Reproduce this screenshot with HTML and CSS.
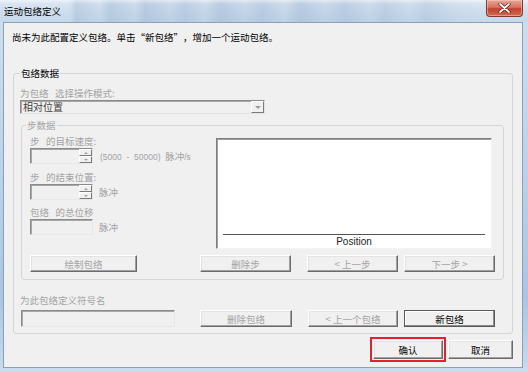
FILE: index.html
```html
<!DOCTYPE html>
<html lang="zh-CN">
<head>
<meta charset="utf-8">
<title>运动包络定义</title>
<link rel="stylesheet" href="styles.css">
</head>
<body>
<div class="window">
  <div class="titlebar">
    <span class="title">运动包络定义</span>
    <div class="close">
      <svg width="13" height="10" viewBox="0 0 13 10"><path d="M2 1 L11 9 M11 1 L2 9" stroke="#5a1a12" stroke-width="3.2" stroke-linecap="round"/><path d="M2 1 L11 9 M11 1 L2 9" stroke="#fff" stroke-width="1.7" stroke-linecap="round"/></svg>
    </div>
  </div>
  <div class="client">
    <p class="msg">尚未为此配置定义包络。单击<span class="fw fw-open">“</span>新包络<span class="fw fw-close">”</span>，增加一个运动包络。</p>
    <fieldset class="group">
      <legend class="legend">包络数据</legend>
      <div class="lbl dis">为包络&nbsp;&nbsp;&nbsp;选择操作模式:</div>
      <div class="select">
        <span class="select-text">相对位置</span>
        <span class="select-btn"><span class="tri-down"></span></span>
      </div>
      <fieldset class="step">
        <legend class="legend step-legend dis">步数据</legend>
        <div class="step-body">
          <div class="fields">
            <div class="lbl dis l1">步&nbsp;&nbsp;&nbsp;的目标速度:</div>
            <div class="field-row">
              <div class="spin"><span class="spin-btns"><span class="sb up"></span><span class="sb down"></span></span></div>
              <span class="unit dis latin">(5000&nbsp;&nbsp;-&nbsp;&nbsp;50000)&nbsp;&nbsp;<span class="cjk">脉冲</span>/s</span>
            </div>
            <div class="lbl dis l2">步&nbsp;&nbsp;&nbsp;的结束位置:</div>
            <div class="field-row">
              <div class="spin"><span class="spin-btns"><span class="sb up"></span><span class="sb down"></span></span></div>
              <span class="unit dis">脉冲</span>
            </div>
            <div class="lbl dis l3">包络&nbsp;&nbsp;&nbsp;的总位移</div>
            <div class="field-row">
              <div class="box"></div>
              <span class="unit dis">脉冲</span>
            </div>
          </div>
          <div class="plot">
            <div class="axis"></div>
            <div class="axis-label">Position</div>
          </div>
        </div>
        <div class="btn-row">
          <button class="btn dis w107">绘制包络</button>
          <button class="btn dis w91 gap-big">删除步</button>
          <button class="btn dis w91 gap16">&lt; 上一步</button>
          <button class="btn dis w91 gap6">下一步 &gt;</button>
        </div>
      </fieldset>
      <div class="lbl dis name-lbl">为此包络定义符号名</div>
      <div class="name-row">
        <div class="box name-box"></div>
        <button class="btn dis w92 gap25">删除包络</button>
        <button class="btn dis w90 gap16">&lt; 上一个包络</button>
        <button class="btn default w91 gap6">新包络</button>
      </div>
    </fieldset>
    <div class="dialog-btns">
      <span class="highlight"><button class="btn ok">确认</button></span>
      <button class="btn cancel">取消</button>
    </div>
  </div>
</div>
</body>
</html>
```

FILE: styles.css
```css
* { box-sizing: border-box; }
html, body { margin: 0; padding: 0; }
body {
  width: 528px;
  height: 372px;
  overflow: hidden;
  font-family: "Noto Sans CJK SC", "Noto Sans CJK JP", sans-serif;
  font-size: 9.5px;
  line-height: 12px;
  color: #000;
}
.window {
  width: 528px;
  height: 372px;
  display: flex;
  flex-direction: column;
  background: linear-gradient(180deg, #cfdff0 0%, #bcd2ea 45%, #a9c5e4 80%, #c9dbee 100%);
}
.titlebar {
  height: 22px;
  flex: none;
  display: flex;
  justify-content: space-between;
  align-items: flex-start;
  padding-left: 4px;
  background:
    linear-gradient(180deg, rgba(255,255,255,0.45) 0, rgba(255,255,255,0) 4px),
    linear-gradient(90deg, rgba(255,255,255,0) 0, rgba(255,255,255,0) 70px, rgba(150,175,205,0.35) 76px, rgba(150,175,205,0.1) 100px, rgba(150,175,205,0.4) 110px, rgba(150,175,205,0.15) 135px, rgba(150,175,205,0.45) 145px, rgba(150,175,205,0.2) 170px, rgba(150,175,205,0.4) 185px, rgba(150,175,205,0.15) 205px, rgba(150,175,205,0.45) 220px, rgba(150,175,205,0.2) 245px, rgba(150,175,205,0.4) 262px, rgba(150,175,205,0.15) 285px, rgba(150,175,205,0.45) 300px, rgba(150,175,205,0.2) 325px, rgba(150,175,205,0.4) 345px, rgba(150,175,205,0.15) 370px, rgba(150,175,205,0.35) 385px, rgba(150,175,205,0.1) 410px, rgba(150,175,205,0.3) 425px, rgba(150,175,205,0.05) 460px, rgba(255,255,255,0) 480px),
    linear-gradient(180deg, #dde8f3 0%, #cfdeed 50%, #c6d8eb 100%);
}
.title {
  margin-top: 5px;
  color: #000;
}
.close {
  width: 37px;
  height: 17px;
  margin-right: 5px;
  border: 1px solid #7d3a33;
  border-top: none;
  border-radius: 0 0 4px 4px;
  background: linear-gradient(180deg, #e6a797 0%, #d7725f 45%, #c2432f 55%, #cf6b4f 100%);
  box-shadow: inset 0 0 0 1px rgba(255,220,210,0.45);
  display: flex;
  align-items: center;
  justify-content: center;
}
.close svg { display: block; }
.client {
  flex: 1;
  margin: 0 5px 4px 3px;
  background: #f0f0f0;
  border: 1px solid #8e9fb4;
  display: flex;
  flex-direction: column;
}
.msg {
  margin: 8px 0 0 8px;
}
.fw {
  display: inline-block;
  width: 9.5px;
}
.fw-open { text-align: right; }
.fw-close { text-align: left; }
.dis { color: #a3a3a3; }
.lbl { white-space: nowrap; }
fieldset {
  margin: 0;
  min-width: 0;
}
.group {
  margin: 24px 9px 0 9px;
  padding: 0 8px 6px 6px;
  border: 1px solid #d5d5d5;
  border-radius: 3px;
}
.legend {
  padding: 0 1px;
  margin: 0;
  line-height: 12px;
}
.group > .lbl:first-of-type { margin-top: 8px; }
.select {
  margin-top: 1px;
  width: 245px;
  height: 14px;
  display: flex;
  align-items: stretch;
  background: #f0f0f0;
  border: 1px solid;
  border-color: #8a8a8a #e3e3e3 #e3e3e3 #8a8a8a;
  box-shadow: inset 1px 1px #a8a8a8;
}
.select-text {
  flex: 1;
  padding-left: 2px;
  line-height: 11px;
  font-size: 10px;
  color: #404040;
}
.select-btn {
  width: 13px;
  background: #f0f0f0;
  border: 1px solid;
  border-color: #fff #7a7a7a #7a7a7a #fff;
  display: flex;
  align-items: center;
  justify-content: center;
}
.tri-down {
  width: 0;
  height: 0;
  border-left: 3px solid transparent;
  border-right: 3px solid transparent;
  border-top: 3px solid #9a9a9a;
}
.step {
  margin: 5px 0 0 1px;
  padding: 0 11px 7px 8px;
  border: 1px solid #d5d5d5;
  border-radius: 3px;
}
.step-legend { margin-left: -4px; }
.step-body {
  display: flex;
  align-items: flex-start;
}
.fields {
  display: flex;
  flex-direction: column;
  align-items: flex-start;
}
.l1 { margin-top: 4px; }
.l2 { margin-top: 7px; }
.l3 { margin-top: 6px; }
.field-row {
  margin-top: 1px;
  display: flex;
  align-items: center;
}
.spin, .box {
  width: 63px;
  height: 16px;
  background: #f0f0f0;
  border: 1px solid;
  border-color: #8a8a8a #e8e8e8 #e8e8e8 #8a8a8a;
  box-shadow: inset 1px 1px #a8a8a8;
  display: flex;
  justify-content: flex-end;
  flex: none;
}
.spin-btns {
  width: 13px;
  display: flex;
  flex-direction: column;
}
.sb {
  flex: 1;
  background: #f0f0f0;
  border: 1px solid;
  border-color: #fff #7a7a7a #7a7a7a #fff;
  display: flex;
  align-items: center;
  justify-content: center;
}
.sb::after {
  content: "";
  width: 0;
  height: 0;
  border-left: 2px solid transparent;
  border-right: 2px solid transparent;
}
.up::after { border-bottom: 2px solid #a0a0a0; }
.down::after { border-top: 2px solid #a0a0a0; }
.unit {
  margin-left: 6px;
  white-space: nowrap;
}
.latin {
  font-family: "Liberation Sans", "Noto Sans CJK SC", sans-serif;
  font-size: 8.5px;
  margin-left: 7px;
}
.cjk {
  font-family: "Noto Sans CJK SC", sans-serif;
  font-size: 9.5px;
}
.plot {
  margin-top: 7px;
  margin-left: auto;
  width: 276px;
  height: 111px;
  background: #fff;
  border: 1px solid;
  border-color: #7d7d7d #f4f4f4 #f4f4f4 #7d7d7d;
  box-shadow: inset 1px 1px #a0a0a0;
  display: flex;
  flex-direction: column;
  justify-content: flex-end;
  padding: 0 6px 1px 6px;
  flex: none;
}
.axis {
  height: 1px;
  background: #555;
}
.axis-label {
  margin-top: 1px;
  height: 11px;
  line-height: 11px;
  text-align: center;
  font-family: "Liberation Sans", sans-serif;
  font-size: 10px;
  color: #222;
}
.btn {
  flex: none;
  height: 17px;
  padding: 0;
  margin: 0;
  font-family: "Noto Sans CJK SC", sans-serif;
  font-size: 9.5px;
  line-height: 12px;
  background: #f0f0f0;
  border: 1px solid;
  border-color: #fff #6b6b6b #6b6b6b #fff;
  box-shadow: inset -1px -1px #a0a0a0, inset 1px 1px #e3e3e3;
  color: #000;
  white-space: nowrap;
}
.btn.dis { color: #a3a3a3; }
.btn.default {
  border-color: #5a5a5a;
  box-shadow: inset -1px -1px #8a8a8a, inset 1px 1px #fff;
}
.btn-row {
  margin-top: 6px;
  display: flex;
}
.w107 { width: 107px; }
.w90 { width: 90px; }
.w91 { width: 91px; }
.w92 { width: 92px; }
.gap-big { margin-left: 63px; }
.gap25 { margin-left: 25px; }
.gap16 { margin-left: 16px; }
.gap6 { margin-left: 6px; }
.name-lbl { margin-top: 14px; }
.name-row {
  margin-top: 4px;
  display: flex;
}
.name-box {
  width: 154px;
  height: 17px;
  margin-left: 1px;
}
.dialog-btns {
  margin-top: 3px;
  padding-right: 9px;
  display: flex;
  justify-content: flex-end;
  align-items: center;
}
.highlight {
  display: flex;
  padding: 1px;
  border: 2px solid #e0242c;
}
.ok {
  width: 70px;
  height: 19px;
}
.cancel {
  width: 65px;
  height: 19px;
  margin-left: 2px;
}
```
